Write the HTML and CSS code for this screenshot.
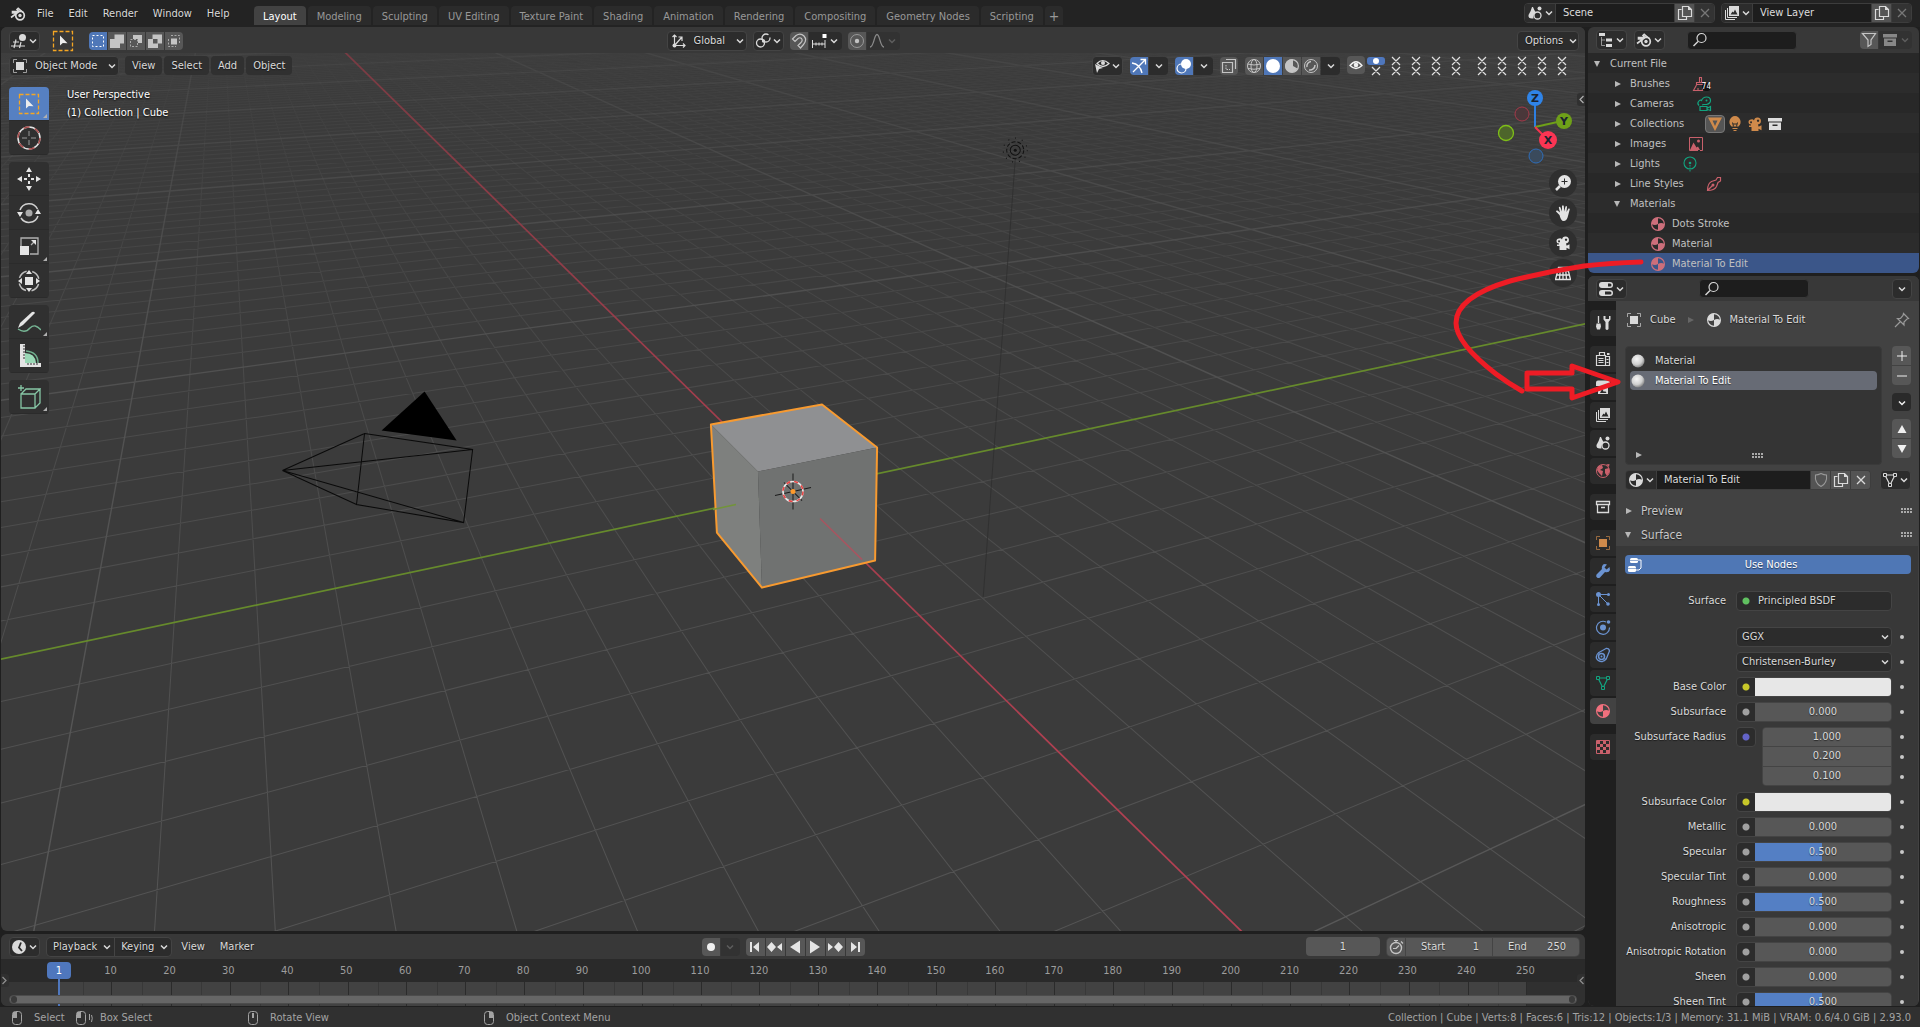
FILE: index.html
```html
<!DOCTYPE html>
<html lang="en">
<head>
<meta charset="utf-8">
<title>Blender</title>
<link rel="stylesheet" href="styles.css">
</head>
<body>
<svg class="sprite" aria-hidden="true">
  <defs>
    <symbol id="chev" viewBox="0 0 10 10"><path d="M2 3.500l3 3 3-3" fill="none" stroke="currentColor" stroke-width="1.500"/></symbol>
    <symbol id="blender" viewBox="0 0 16 16"><path d="M1 11.500l6-4.500H2.500V5.500H9L7 3.500 8.200 2.300l5 4.200" fill="none" stroke="currentColor" stroke-width="1.600"/><circle cx="10" cy="9.500" r="4.300" fill="none" stroke="currentColor" stroke-width="1.700"/><circle cx="10" cy="9.500" r="1.700" fill="currentColor"/></symbol>
    <symbol id="view3d" viewBox="0 0 16 16"><path d="M5 6.500L3 15M10 9l-1.500 6M2 9h6M0 13h14" fill="none" stroke="currentColor" stroke-width="1.200"/><circle cx="11.500" cy="4.500" r="3.500" fill="currentColor"/></symbol>
    <symbol id="boxsel" viewBox="0 0 22 22"><rect x="1.500" y="1.500" width="19" height="19" fill="none" stroke="#f5a623" stroke-width="1.300" stroke-dasharray="4 2"/><path d="M8 5.500v10l2.800-2.500 4.700.300z" fill="#ececec"/></symbol>
    <symbol id="selset" viewBox="0 0 16 16"><rect x="2.500" y="2.500" width="11" height="11" fill="none" stroke="#fff" stroke-dasharray="2 2"/></symbol>
    <symbol id="selext" viewBox="0 0 16 16"><path d="M5.500 1.500H15v9h-4v4.500H1v-9h4.500z" fill="#c4c4c4"/></symbol>
    <symbol id="selsub" viewBox="0 0 16 16"><path d="M5 2h9v8h-4V6H5z" fill="#c4c4c4"/><rect x="2.500" y="6.500" width="7" height="7" fill="none" stroke="#aaa" stroke-dasharray="2 1.500"/></symbol>
    <symbol id="selinv" viewBox="0 0 16 16"><path d="M5.500 1.500H15v9h-4v4.500H1v-9h4.500zM6 6v4.500h4.500V6z" fill="#c4c4c4" fill-rule="evenodd"/></symbol>
    <symbol id="selint" viewBox="0 0 16 16"><path d="M5 2.500h8.500V10M2.500 6v7.500H10" fill="none" stroke="#aaa" stroke-dasharray="2 1.500"/><rect x="5" y="5.500" width="6" height="6" fill="#c4c4c4"/></symbol>
    <symbol id="objmode" viewBox="0 0 16 16"><rect x="4" y="4" width="8" height="8" fill="currentColor"/><path d="M1.500 5V1.500H5M11 1.500h3.500V5M14.500 11v3.500H11M5 14.500H1.500V11" fill="none" stroke="currentColor" opacity=".65"/></symbol>
    <symbol id="axes" viewBox="0 0 16 16"><path d="M3.500 2v10.500H14M3.500 12.500L11 4M7.500 4H11v4M1.500 4l2-2 2 2M12 10.500l2 2-2 2" fill="none" stroke="currentColor" stroke-width="1.200"/><circle cx="3.500" cy="12.500" r="2" fill="currentColor"/></symbol>
    <symbol id="pivot" viewBox="0 0 16 16"><circle cx="5.500" cy="10" r="4" fill="none" stroke="currentColor" stroke-width="1.300"/><circle cx="11" cy="5" r="4" fill="none" stroke="currentColor" stroke-width="1.300" stroke-dasharray="21 3"/><circle cx="8.500" cy="8" r="1.700" fill="currentColor"/></symbol>
    <symbol id="magnet" viewBox="0 0 16 16"><path d="M1.500 6L5 2.500Q9.500-.500 13 3q3.500 4-.500 8.500L9.500 15 7 12.500 10 9.500q2-2 .500-4Q9 4 7 5.500L4 8.500z" fill="none" stroke="currentColor" stroke-width="1.200"/></symbol>
    <symbol id="snapinc" viewBox="0 0 16 16"><path d="M1.500 7v8M14 7v8M1.500 11H14M5 9.500v3M8 9.500v3M11 9.500v3" fill="none" stroke="currentColor"/><rect x="11.500" y="1" width="4" height="4" fill="#fff"/></symbol>
    <symbol id="propo" viewBox="0 0 16 16"><circle cx="8" cy="8" r="6.500" fill="none" stroke="currentColor" opacity=".6"/><circle cx="8" cy="8" r="2.200" fill="currentColor"/></symbol>
    <symbol id="smooth" viewBox="0 0 16 16"><path d="M1 14c4 0 4-12.500 7-12.500S11 14 15 14" fill="none" stroke="currentColor" stroke-width="1.300"/></symbol>
    <symbol id="viseye" viewBox="0 0 16 16"><path d="M3 5.500q5.500-6 12 0-6 6-12 0z" fill="none" stroke="currentColor" stroke-width="1.200"/><circle cx="9" cy="5" r="2" fill="currentColor"/><path d="M1 6l8 4-4 1-2 4z" fill="currentColor"/></symbol>
    <symbol id="gizmo" viewBox="0 0 16 16"><path d="M1 5q8 1 10 10M2 14L14 2M9.500 1.500H14.500V6.500" fill="none" stroke="#fff" stroke-width="1.300"/></symbol>
    <symbol id="overlay" viewBox="0 0 16 16"><circle cx="10" cy="6" r="5" fill="#fff"/><circle cx="5.500" cy="10.500" r="4.500" fill="none" stroke="#fff" stroke-width="1.200"/></symbol>
    <symbol id="xray" viewBox="0 0 16 16"><path d="M1.500 4.500h10v10h-10zM5 1.500h9.500V11" fill="none" stroke="currentColor" stroke-width="1.200"/><path d="M5 7v4.500h4" fill="none" stroke="currentColor" stroke-dasharray="1.500 1"/></symbol>
    <symbol id="wire" viewBox="0 0 16 16"><circle cx="8" cy="8" r="6.500" fill="none" stroke="currentColor"/><ellipse cx="8" cy="8" rx="3" ry="6.500" fill="none" stroke="currentColor"/><path d="M1.500 6q6.500 2 13 0M2 10.500q6 1.500 12 0" fill="none" stroke="currentColor"/></symbol>
    <symbol id="solid" viewBox="0 0 16 16"><circle cx="8" cy="8" r="7" fill="#fff"/></symbol>
    <symbol id="mat" viewBox="0 0 16 16"><circle cx="8" cy="8" r="6.400" fill="none" stroke="currentColor" stroke-width="1.200"/><path d="M9 1.500V8l4.500 2.500A6.500 6.500 0 1 1 9 1.500z" fill="currentColor"/></symbol>
    <symbol id="material" viewBox="0 0 16 16"><circle cx="8" cy="8" r="6.400" fill="none" stroke="currentColor" stroke-width="1.200"/><path d="M8 1.500V8q-3 2-6.500 0A6.500 6.500 0 0 1 8 1.500zM8 8q3-2 6.500 0A6.500 6.500 0 0 1 8 14.500z" fill="currentColor"/></symbol>
    <symbol id="render" viewBox="0 0 16 16"><circle cx="8" cy="8" r="6.500" fill="none" stroke="currentColor"/><path d="M4 9a4.500 4.500 0 0 1 4-5.500M12 7a5 5 0 0 1-6 5" fill="none" stroke="currentColor" stroke-width="1.500"/></symbol>
    <symbol id="eye" viewBox="0 0 16 16"><path d="M2 8.500q6-7.500 12 0-6 6-12 0z" fill="none" stroke="currentColor" stroke-width="1.300"/><circle cx="8" cy="8" r="2.300" fill="currentColor"/></symbol>
    <symbol id="scene" viewBox="0 0 16 16"><path d="M5 2q-1 4-3.500 8Q1 13.500 5 13.500h1.500Q6 9 9 7.500 7 5 6 2z" fill="currentColor"/><circle cx="12.500" cy="3.500" r="2" fill="currentColor"/><circle cx="10.500" cy="10.500" r="3.500" fill="none" stroke="currentColor" stroke-width="1.300"/></symbol>
    <symbol id="layers" viewBox="0 0 16 16"><path d="M1.500 5v9.500H11M3.500 3v9.500H13" fill="none" stroke="currentColor"/><path d="M5 1h10v10H5zM6.500 9.500h7L11 4.500 9.500 7.500l-1-1z" fill="currentColor" fill-rule="evenodd"/></symbol>
    <symbol id="image" viewBox="0 0 16 16"><path d="M10 14.500H1.500v-13h13v13H12" fill="none" stroke="currentColor"/><path d="M2 14l3.500-7.500 3 5 1.500-1 2 3.500z" fill="currentColor"/><circle cx="10.500" cy="5" r="1.500" fill="currentColor"/></symbol>
    <symbol id="copy" viewBox="0 0 16 16"><path d="M4.500 4.500h-3v10h8v-3M5.500 1.500h6l3 3v7h-9z" fill="none" stroke="currentColor" stroke-width="1.200"/><path d="M11 1v4h4z" fill="currentColor"/></symbol>
    <symbol id="x" viewBox="0 0 16 16"><path d="M4 4l8 8M12 4l-8 8" stroke="currentColor" stroke-width="1.300"/></symbol>
    <symbol id="tree" viewBox="0 0 16 16"><path d="M1 1h6v3H1zM8 6.500h6v3H8zM8 12h6v3H8z" fill="currentColor"/><path d="M3.500 5v8.500H7M3.500 8H7" fill="none" stroke="currentColor" opacity=".6"/></symbol>
    <symbol id="search" viewBox="0 0 16 16"><circle cx="9.500" cy="6" r="4.500" fill="none" stroke="currentColor" stroke-width="1.200"/><path d="M6 9.500L1.500 14" stroke="currentColor" stroke-width="1.400"/></symbol>
    <symbol id="funnel" viewBox="0 0 16 16"><path d="M1.500 1.500h13L10 8v4.500l-3 2V8z" fill="none" stroke="currentColor" stroke-width="1.200"/></symbol>
    <symbol id="box" viewBox="0 0 16 16"><path d="M1 2h14v3.500H1zM2 6.500h12V14H2zM5.500 8.500v1.500h5V8.500z" fill="currentColor" fill-rule="evenodd"/></symbol>
    <symbol id="boxline" viewBox="0 0 16 16"><path d="M1.500 2.500h13v3h-13zM2.500 5.500h11v8h-11zM6 8.500h4" fill="none" stroke="currentColor" stroke-width="1.300"/></symbol>
    <symbol id="brush" viewBox="0 0 16 16"><path d="M7.500 1.500h2v5h-2zM4.500 6.500h8v2h-8zM4.500 9l-3 5.500h9V12M6 14v-2" fill="none" stroke="currentColor" stroke-width="1.100"/></symbol>
    <symbol id="camline" viewBox="0 0 16 16"><path d="M3 9.500q-2-2-.500-4t3-1Q7 1 10.500 1q4 0 4 3.500 0 3-4 4H7.500L6 9M4 10.500h7v4H4zM11.500 12l3-1.500v4l-3-1" fill="none" stroke="currentColor" stroke-width="1.200"/><circle cx="10.500" cy="4.500" r="1" fill="currentColor"/></symbol>
    <symbol id="camfill" viewBox="0 0 16 16"><path d="M4 3.500a2.500 2.500 0 0 1 3 1A3.500 3.500 0 1 1 11 8.500v1h.500v1.200l3-1.500v5l-3-1.500V15H4.500v-4H2v-1.500h2V8.500a2.500 2.500 0 0 1 0-5zM4 5.200a1 1 0 1 0 .1 0zM11 3.500a1.200 1.200 0 1 0 .1 0z" fill="currentColor" fill-rule="evenodd"/></symbol>
    <symbol id="tri" viewBox="0 0 16 16"><path d="M1 1.500h14L8 15zM5.500 4.500L8 10l2.500-5.500z" fill="currentColor" fill-rule="evenodd"/></symbol>
    <symbol id="bulb" viewBox="0 0 16 16"><path d="M8 0a6 6 0 0 1 3.500 10.500H4.500A6 6 0 0 1 8 0z" fill="currentColor"/><path d="M5.500 12.500h5M6.500 14.500h3" stroke="currentColor"/><path d="M5.500 6.500l1 4M10.500 6.500l-1 4M6 8h4" stroke="#2b2b2b"/></symbol>
    <symbol id="light" viewBox="0 0 16 16"><circle cx="8" cy="7" r="6" fill="none" stroke="currentColor" stroke-width="1.100"/><circle cx="8" cy="7" r="1.300" fill="currentColor"/><path d="M8 9v7" stroke="currentColor" stroke-dasharray="1.500 1"/></symbol>
    <symbol id="pen" viewBox="0 0 16 16"><path d="M1.500 14.500q0-7 4-9L10 4l1.500-2.500H14.500V5L12 6.500l-1.500 4q-2 4-9 4zM2 14l4.500-4.500" fill="none" stroke="currentColor" stroke-width="1.200"/><circle cx="7" cy="9" r="1.500" fill="currentColor"/></symbol>
    <symbol id="props" viewBox="0 0 16 16"><rect x="1" y="1" width="14" height="6" rx="3" fill="currentColor"/><rect x="1" y="9" width="14" height="6" rx="3" fill="currentColor"/><path d="M10 2.500h2a1.500 1.500 0 0 1 0 3h-2zM7 10.500h5a1.500 1.500 0 0 1 0 3H7z" fill="#2b2b2b"/></symbol>
    <symbol id="tool" viewBox="0 0 16 16"><path d="M3.500 1v7" stroke="currentColor" stroke-width="1.300"/><path d="M1.500 8.500h4l.5 3-1 3h-3l-1-3zM8.500 1v3.500L10.500 7v7q1.500 2 3 0V7l2-2.500V1h-1.500v3h-3.500V1z" fill="currentColor"/></symbol>
    <symbol id="rend" viewBox="0 0 16 16"><path d="M4.500 4V1.500h5V4M1.500 4.500h9v10h-9zM10.500 5.500h4v9h-4M11.500 8.500h2M11.500 11.500h2" fill="none" stroke="currentColor" stroke-width="1.200"/><path d="M3.500 7.500h5M3.500 9.500h5M3.500 11.500h5" stroke="currentColor"/><path d="M12 2h2.500v2H12z" fill="currentColor"/></symbol>
    <symbol id="output" viewBox="0 0 16 16"><path d="M1 3.500q0-2 2-2h10q2 0 2 2V7H1zM3 8h10v7H3z" fill="currentColor"/><path d="M5 14l2-4 2 3 1-1 1.500 2z" fill="#2b2b2b"/></symbol>
    <symbol id="world" viewBox="0 0 16 16"><circle cx="8" cy="8" r="6.500" fill="none" stroke="currentColor"/><path d="M3 3l4-1 1 3-3 2 3 1-1 5-3-3-2-3zM10 6l4-1v5l-2 3-2-3zM11 1.500l3.500-.500-.500 3z" fill="currentColor"/></symbol>
    <symbol id="wrench" viewBox="0 0 16 16"><path d="M14.500 4l-3 2.500-2-2L12 1.500Q8 0 7 3.500q-.500 1.500 0 2.500L1.500 11.500q-1 2 .5 3t3 0L10 9q4 1 5-2z" fill="currentColor"/></symbol>
    <symbol id="part" viewBox="0 0 16 16"><circle cx="3.500" cy="3.500" r="2.500" fill="currentColor"/><path d="M3.500 3.500H14M3.500 3.500V14M4 4l9 9" stroke="currentColor"/><circle cx="13.500" cy="3.500" r="1.500" fill="currentColor"/><circle cx="3.500" cy="13.500" r="1.500" fill="currentColor"/><circle cx="13" cy="13" r="1.800" fill="currentColor"/></symbol>
    <symbol id="phys" viewBox="0 0 16 16"><path d="M11 3a6.500 6.500 0 1 0 3.500 5.500" fill="none" stroke="currentColor" stroke-width="1.200"/><circle cx="8" cy="8.500" r="3" fill="currentColor"/><circle cx="13.500" cy="3" r="1.800" fill="currentColor"/></symbol>
    <symbol id="constr" viewBox="0 0 16 16"><path d="M3 6l8-4.500Q14 1 14.500 4L11 12.500M4 5.500Q.500 8 1.500 11.500q2 3.500 6 3 3-1 3.500-3" fill="none" stroke="currentColor" stroke-width="1.300"/><circle cx="6.500" cy="9.500" r="3" fill="none" stroke="currentColor" stroke-width="1.500"/><circle cx="6.500" cy="9.500" r="1" fill="currentColor"/></symbol>
    <symbol id="mesh" viewBox="0 0 16 16"><path d="M3 3h10L8 13z" fill="none" stroke="currentColor" stroke-width="1.200"/><path d="M1.500 1.500h3v3h-3zM11.500 1.500h3v3h-3zM6.500 11.500h3v3h-3z" fill="#2b2b2b" stroke="currentColor"/></symbol>
    <symbol id="check" viewBox="0 0 16 16"><path d="M1.500 1.500h13v13h-13z" fill="none" stroke="currentColor"/><path d="M2 2h3v3H2zM8 2h3v3H8zM5 5h3v3H5zM11 5h3v3h-3zM2 8h3v3H2zM8 8h3v3H8zM5 11h3v3H5zM11 11h3v3h-3z" fill="currentColor"/></symbol>
    <symbol id="pin" viewBox="0 0 16 16"><path d="M9.500 1.500l5 5-1.500.5-3 3v3L3.500 6.500h3l2.500-3zM1 15l5.500-5.500" fill="none" stroke="currentColor" stroke-width="1.200"/></symbol>
    <symbol id="sphere" viewBox="0 0 16 16"><circle cx="8" cy="8" r="6.500" fill="url(#ball)"/></symbol>
    <symbol id="shield" viewBox="0 0 16 16"><path d="M8 1.500q3 1.500 5.500 1.500 1 8-5.500 11.500Q1.500 11 2.500 3 5 3 8 1.500z" fill="none" stroke="currentColor" stroke-width="1.100"/></symbol>
    <symbol id="nodes" viewBox="0 0 16 16"><rect x="3" y="1" width="8" height="5" rx="1.500" fill="#fff"/><rect x="1" y="9" width="8" height="6" rx="1.500" fill="#fff"/><path d="M11 3h3v8l-2 2H9" fill="none" stroke="#fff"/><path d="M3 3.500h8M1 11.500h8" stroke="#4f76b3" stroke-width=".6"/></symbol>
    <symbol id="clock" viewBox="0 0 16 16"><circle cx="8" cy="8" r="7" fill="currentColor"/><path d="M10 3.500L8 8.500l3 3.500" fill="none" stroke="#2b2b2b" stroke-width="1.800"/></symbol>
    <symbol id="stopw" viewBox="0 0 16 16"><circle cx="8" cy="9" r="5.500" fill="none" stroke="currentColor" stroke-width="1.400"/><path d="M6 1.500h4M8 2v2M13 2.500l2 2M8 9.500L11 6.500M8 9.500H5" stroke="currentColor" fill="none" stroke-width="1.200"/></symbol>
    <symbol id="mL" viewBox="0 0 16 16"><rect x="3.500" y="1.500" width="9" height="13" rx="3" fill="none" stroke="currentColor"/><path d="M4 2h4v6H3.500z" fill="currentColor"/></symbol>
    <symbol id="mM" viewBox="0 0 16 16"><rect x="3.500" y="1.500" width="9" height="13" rx="3" fill="none" stroke="currentColor"/><path d="M7 3h2v5H7z" fill="currentColor"/></symbol>
    <symbol id="mR" viewBox="0 0 16 16"><rect x="3.500" y="1.500" width="9" height="13" rx="3" fill="none" stroke="currentColor"/><path d="M8 2h4v6H8z" fill="currentColor"/></symbol>
    <radialGradient id="ball" cx=".4" cy=".35" r=".7"><stop offset="0" stop-color="#f6f6f6"/><stop offset=".6" stop-color="#d0d0d0"/><stop offset="1" stop-color="#777"/></radialGradient>
  </defs>
</svg>

<header class="topbar">
  <nav class="menus">
    <button class="menu logo" aria-label="Blender"><svg class="i"><use href="#blender"/></svg></button>
    <button class="menu">File</button><button class="menu">Edit</button><button class="menu">Render</button><button class="menu">Window</button><button class="menu">Help</button>
  </nav>
  <nav class="tabs">
    <button class="tab on">Layout</button><button class="tab">Modeling</button><button class="tab">Sculpting</button><button class="tab">UV Editing</button><button class="tab">Texture Paint</button><button class="tab">Shading</button><button class="tab">Animation</button><button class="tab">Rendering</button><button class="tab">Compositing</button><button class="tab">Geometry Nodes</button><button class="tab">Scripting</button><button class="tab plus">+</button>
  </nav>
  <div class="ids">
    <div class="idrow">
      <button class="pick" aria-label="Browse scene"><svg class="i"><use href="#scene"/></svg><svg class="c"><use href="#chev"/></svg></button><input aria-label="Scene name" value="Scene"><button class="sq" aria-label="New scene"><svg class="i"><use href="#copy"/></svg></button><button class="sq dim" aria-label="Delete scene"><svg class="i"><use href="#x"/></svg></button>
    </div>
    <div class="idrow">
      <button class="pick" aria-label="Browse view layer"><svg class="i"><use href="#layers"/></svg><svg class="c"><use href="#chev"/></svg></button><input aria-label="View layer name" value="View Layer"><button class="sq" aria-label="New view layer"><svg class="i"><use href="#copy"/></svg></button><button class="sq dim" aria-label="Delete view layer"><svg class="i"><use href="#x"/></svg></button>
    </div>
  </div>
</header>

<main class="work">
  <div class="left">
    <section class="area view">
      <svg class="scene" viewBox="0 0 1584 903" preserveAspectRatio="xMidYMid slice" aria-label="3D scene">
        <defs>
          <linearGradient id="g1" gradientUnits="userSpaceOnUse" x1="0" y1="25" x2="0" y2="903"><stop offset="0" stop-color="#4d4d4d" stop-opacity=".18"/><stop offset=".15" stop-color="#4d4d4d" stop-opacity=".45"/><stop offset=".35" stop-color="#4e4e4e" stop-opacity=".75"/><stop offset=".6" stop-color="#4f4f4f" stop-opacity=".95"/><stop offset="1" stop-color="#545454"/></linearGradient>
          <linearGradient id="g10" gradientUnits="userSpaceOnUse" x1="0" y1="25" x2="0" y2="903"><stop offset="0" stop-color="#505050" stop-opacity=".4"/><stop offset=".3" stop-color="#525252" stop-opacity=".9"/><stop offset="1" stop-color="#585858"/></linearGradient>
          <linearGradient id="gx" gradientUnits="userSpaceOnUse" x1="0" y1="25" x2="0" y2="903"><stop offset="0" stop-color="#7a3b43"/><stop offset=".4" stop-color="#a33d4c"/><stop offset="1" stop-color="#b54153"/></linearGradient>
        </defs>
        <path id="minor" fill="none" stroke="url(#g1)"/>
        <path id="major" fill="none" stroke="url(#g10)" stroke-width="1.400"/>
        <path id="axisx" fill="none" stroke="url(#gx)" stroke-width="1.700"/>
        <path id="axisy" fill="none" stroke="#668a2c" stroke-width="1.700"/>
        <path d="M424 364L381 403L456 413z"/>
        <path d="M364 406L472 422L463 495L356 477zM282 443L364 406M282 443L472 422M282 443L463 495M282 443L356 477" fill="none" stroke="#0a0a0a"/>
        <path d="M1014 132L982 569" stroke="#2c2c2c" stroke-width=".7"/>
        <g fill="none" stroke="#111"><circle cx="1014" cy="123" r="5"/><circle cx="1014" cy="123" r="8.500" stroke-dasharray="4 2"/><circle cx="1014" cy="123" r="12" stroke-dasharray="1 6"/></g><circle cx="1014" cy="123" r="1.500" fill="#111"/>
        <path d="M710 397L821 377L876 420L757 444z" fill="#8f9092"/>
        <path d="M710 397L757 444L761 560L716 505z" fill="#7e807e"/>
        <path d="M757 444L876 420L874 533L761 560z" fill="#707271"/>
        <path d="M710 397L821 377L876 420L874 533L761 560L716 505z" fill="none" stroke="#f79a30" stroke-width="2" stroke-linejoin="round"/>
        <path d="M819 491L861 532" stroke="#a85560" stroke-width="1.500"/>
        <path d="M712 482L735 477" stroke="#72943a" stroke-width="1.500"/>
        <path d="M792 446v36M774 468l36-8M783 455l18 18" stroke="#1c1c1c" fill="none"/>
        <circle cx="792" cy="464" r="10" fill="none" stroke="#e8e8e8" stroke-width="1.600"/><circle cx="792" cy="464" r="10" fill="none" stroke="#e84545" stroke-width="1.600" stroke-dasharray="4 4"/>
        <circle cx="792" cy="464" r="2.500" fill="#ff9a2b"/>
      </svg>
      <div class="hdr toolhdr">
        <div class="grp">
          <button class="dd" aria-label="Editor type"><svg class="i"><use href="#view3d"/></svg><svg class="c"><use href="#chev"/></svg></button>
          <button class="bare" aria-label="Select box"><svg class="i22"><use href="#boxsel"/></svg></button>
          <div class="seg modes"><button class="on" aria-label="Set"><svg class="i"><use href="#selset"/></svg></button><button aria-label="Extend"><svg class="i"><use href="#selext"/></svg></button><button aria-label="Subtract"><svg class="i"><use href="#selsub"/></svg></button><button aria-label="Invert"><svg class="i"><use href="#selinv"/></svg></button><button aria-label="Intersect"><svg class="i"><use href="#selint"/></svg></button></div>
        </div>
        <div class="grp mid">
          <label class="sel orient"><svg class="i"><use href="#axes"/></svg><select aria-label="Orientation"><option>Global</option></select><svg class="c"><use href="#chev"/></svg></label>
          <button class="dd" aria-label="Pivot"><svg class="i"><use href="#pivot"/></svg><svg class="c"><use href="#chev"/></svg></button>
          <div class="seg"><button aria-label="Snap"><svg class="i"><use href="#magnet"/></svg></button><button class="dark" aria-label="Snap to"><svg class="i"><use href="#snapinc"/></svg><svg class="c"><use href="#chev"/></svg></button></div>
          <div class="seg"><button aria-label="Proportional editing"><svg class="i"><use href="#propo"/></svg></button><button class="dark off" aria-label="Falloff"><svg class="i"><use href="#smooth"/></svg><svg class="c"><use href="#chev"/></svg></button></div>
        </div>
        <div class="grp end"><button class="dd opt">Options<svg class="c"><use href="#chev"/></svg></button></div>
      </div>
      <div class="hdr viewhdr">
        <label class="sel mode"><svg class="i"><use href="#objmode"/></svg><select aria-label="Mode"><option>Object Mode</option></select><svg class="c"><use href="#chev"/></svg></label>
        <div class="pulls"><button>View</button><button>Select</button><button>Add</button><button>Object</button></div>
        <div class="rt">
          <button class="dd" aria-label="Visibility"><svg class="i"><use href="#viseye"/></svg><svg class="c"><use href="#chev"/></svg></button>
          <div class="seg"><button class="on" aria-label="Gizmos"><svg class="i"><use href="#gizmo"/></svg></button><button class="dark s" aria-label="Gizmo options"><svg class="c"><use href="#chev"/></svg></button></div>
          <div class="seg"><button class="on" aria-label="Overlays"><svg class="i"><use href="#overlay"/></svg></button><button class="dark s" aria-label="Overlay options"><svg class="c"><use href="#chev"/></svg></button></div>
          <div class="seg"><button aria-label="X-ray"><svg class="i"><use href="#xray"/></svg></button></div>
          <div class="seg"><button aria-label="Wireframe"><svg class="i"><use href="#wire"/></svg></button><button class="on" aria-label="Solid"><svg class="i"><use href="#solid"/></svg></button><button aria-label="Material preview"><svg class="i"><use href="#mat"/></svg></button><button aria-label="Rendered"><svg class="i"><use href="#render"/></svg></button><button class="dark s" aria-label="Shading options"><svg class="c"><use href="#chev"/></svg></button></div>
          <div class="layers"><div class="seg"><button class="lit" aria-label="Collections"><svg class="i"><use href="#eye"/></svg></button></div>
          <svg class="xs" viewBox="0 0 206 20" aria-label="Collection layers"><rect x="2" y="1" width="18" height="8" rx="3" fill="#4f77bd"/><circle cx="11" cy="5" r="3" fill="#fff"/>
            <path stroke="#e0e0e0" stroke-width="1.200" d="M7 11l8 8m0-8l-8 8M27 1l8 8m0-8l-8 8M27 11l8 8m0-8l-8 8M47 1l8 8m0-8l-8 8M47 11l8 8m0-8l-8 8M67 1l8 8m0-8l-8 8M67 11l8 8m0-8l-8 8M87 1l8 8m0-8l-8 8M87 11l8 8m0-8l-8 8M113 1l8 8m0-8l-8 8M113 11l8 8m0-8l-8 8M133 1l8 8m0-8l-8 8M133 11l8 8m0-8l-8 8M153 1l8 8m0-8l-8 8M153 11l8 8m0-8l-8 8M173 1l8 8m0-8l-8 8M173 11l8 8m0-8l-8 8M193 1l8 8m0-8l-8 8M193 11l8 8m0-8l-8 8"/></svg></div>
        </div>
      </div>
      <div class="stage">
        <div class="toolbar">
          <div class="tools"><button class="on more" aria-label="Select box"><svg class="i22"><use href="#boxsel"/></svg></button><button aria-label="Cursor"><svg viewBox="0 0 24 24"><circle cx="12" cy="12" r="11" fill="none" stroke="#e4e4e4" stroke-width="1.500"/><circle cx="12" cy="12" r="11" fill="none" stroke="#a84a4a" stroke-width="1.500" stroke-dasharray="6 5.500"/><path d="M12 5v5M12 14v5M5 12h5M14 12h5" stroke="#999"/></svg></button></div>
          <div class="tools">
            <button aria-label="Move"><svg viewBox="0 0 24 24" fill="#e4e4e4"><path d="M12 0l3 5H9zM12 24l3-5H9zM0 12l5-3v6zM24 12l-5-3v6zM11 7h2v3h-2zM11 14h2v3h-2zM7 11h3v2H7zM14 11h3v2h-3z"/></svg></button>
            <button aria-label="Rotate"><svg viewBox="0 0 24 24"><path d="M3 9a9.500 9.500 0 0 1 17.500-1M21 15a9.500 9.500 0 0 1-17 2" fill="none" stroke="#d0d0d0" stroke-width="1.500"/><path d="M0 11h6l-3 5zM18 13h6l-3-5z" fill="#e4e4e4"/><circle cx="12" cy="12" r="3.500" fill="#aaa"/></svg></button>
            <button class="more" aria-label="Scale"><svg viewBox="0 0 24 24"><path d="M4 12V3h17v16h-8M14 10l4-4" fill="none" stroke="#b0b0b0" stroke-width="1.300"/><path d="M3 11h9v9H3zM14 5h5v5z" fill="#e4e4e4"/></svg></button>
            <button aria-label="Transform"><svg viewBox="0 0 24 24"><circle cx="12" cy="12" r="10" fill="none" stroke="#c0c0c0" stroke-width="1.500" stroke-dasharray="10 5.700" stroke-dashoffset="-3"/><path d="M8 8h8v8H8zM12 1l3 4H9zM12 23l3-4H9zM1 12l4-3v6zM23 12l-4-3v6z" fill="#e4e4e4"/></svg></button>
          </div>
          <div class="tools">
            <button class="more" aria-label="Annotate"><svg viewBox="0 0 24 24"><path d="M1 18l2-5L15 2q2-1 3 1L6 15z" fill="#e4e4e4"/><path d="M1 19q7 5 12-1 5-5 11 2" fill="none" stroke="#76b594" stroke-width="1.400"/></svg></button>
            <button aria-label="Measure"><svg viewBox="0 0 24 24"><path d="M3 0h5v19h16v4H3z" fill="#e4e4e4"/><path d="M8 19V9q10 0 11 10z" fill="#9ad9b6"/><path d="M9 7q12 1 12 12" fill="none" stroke="#6fae8d" stroke-width="1.500"/><path d="M6 2h2M6 5h2M6 8h2M6 11h2M6 14h2M11 19v2M14 19v2M17 19v2M20 19v2" stroke="#333"/></svg></button>
          </div>
          <div class="tools"><button class="more" aria-label="Add cube"><svg viewBox="0 0 24 24"><path d="M4 9h14v14H4zM4 9l5-5h14l-5 5M23 4v14l-5 5M1 3h6M4 0v6" fill="none" stroke="#86c6a5" stroke-width="1.300"/></svg></button></div>
        </div>
        <div class="info"><span>User Perspective</span><span>(1) Collection | Cube</span></div>
        <div class="nav">
          <svg class="giz" viewBox="0 0 80 80" aria-label="Axis gizmo"><path d="M38 40V12" stroke="#2d7fe0" stroke-width="2"/><path d="M38 40l27-6" stroke="#6fa019" stroke-width="2"/><path d="M38 40l12 12" stroke="#f5334f" stroke-width="2"/><circle cx="25" cy="27" r="7" fill="#4a373a" stroke="#a53a4a"/><circle cx="9" cy="46" r="7.500" fill="#4d652b" stroke="#7fbf18" stroke-width="1.300"/><circle cx="39" cy="69" r="7" fill="#3a4a5c" stroke="#2e6db8"/><circle cx="38" cy="11" r="8" fill="#2f84e8"/><circle cx="67" cy="34" r="8" fill="#6fa019"/><circle cx="51" cy="53" r="9" fill="#fb3553"/><g class="ax"><text x="38" y="15">Z</text><text x="67" y="38">Y</text><text x="51" y="57">X</text></g></svg>
          <button aria-label="Zoom"><svg class="i"><circle cx="9.500" cy="6.500" r="6.500" fill="currentColor"/><path d="M5 11l-4 4" stroke="currentColor" stroke-width="2.500"/><path d="M9.500 3.500v6M6.500 6.500h6" stroke="#2b2b2b"/></svg></button>
          <button aria-label="Pan"><svg class="i"><path d="M4.500 10L1 6.500q0-1.500 1.500-1L5 7.500 3.800 2.500q.700-1.500 1.700 0L7 6.500 7 1q1-1.500 1.800 0L9.200 6.500 10.500 1.500q1.200-1 1.500.5L11.500 7l2-3.500q1.500-.500 1.200 1L13 11q-1 5-4.500 5Q6 16 4.500 10z" fill="currentColor"/></svg></button>
          <button aria-label="Camera view"><svg class="i"><use href="#camfill"/></svg></button>
          <button aria-label="Perspective"><svg class="i"><path d="M3.500 2.500h9l3 12H.500zM8 2v12M5.500 2.500L4.500 14.500M10.500 2.500l1 12M2.500 6h11M1.500 10h13" fill="none" stroke="currentColor" stroke-width="1.300"/></svg></button>
        </div>
        <button class="nub" aria-label="Show sidebar"><svg viewBox="0 0 8 13"><path d="M6.500 3L3 6.500 6.500 10" fill="none" stroke="#b0b0b0" stroke-width="1.200"/></svg></button>
      </div>
    </section>

    <section class="area time">
      <div class="hdr timehdr">
        <div class="grp">
          <button class="dd" aria-label="Editor type"><svg class="i"><use href="#clock"/></svg><svg class="c"><use href="#chev"/></svg></button>
          <div class="seg lined"><button class="dark pb">Playback<svg class="c"><use href="#chev"/></svg></button><button class="dark pb">Keying<svg class="c"><use href="#chev"/></svg></button></div>
          <button class="menu">View</button><button class="menu">Marker</button>
        </div>
        <div class="grp mid">
          <div class="seg"><button class="lit" aria-label="Auto keying"><svg class="i"><circle cx="8" cy="8" r="4" fill="currentColor"/></svg></button><button class="dark s off" aria-label="Keying options"><svg class="c"><use href="#chev"/></svg></button></div>
          <div class="seg play"><button aria-label="First frame"><svg class="i"><path d="M3 3h2v10H3zM12 3v10L6 8z" fill="currentColor"/></svg></button><button aria-label="Previous keyframe"><svg class="i"><path d="M0 8l4.500-5L9 8l-4.500 5zM15 4v8l-5-4z" fill="currentColor"/></svg></button><button aria-label="Play reverse"><svg class="i"><path d="M13 1.500v13L3 8z" fill="currentColor"/></svg></button><button aria-label="Play"><svg class="i"><path d="M3 1.500v13L13 8z" fill="currentColor"/></svg></button><button aria-label="Next keyframe"><svg class="i"><path d="M16 8l-4.500-5L7 8l4.500 5zM1 4v8l5-4z" fill="currentColor"/></svg></button><button aria-label="Last frame"><svg class="i"><path d="M11 3h2v10h-2zM4 3v10l6-5z" fill="currentColor"/></svg></button></div>
        </div>
        <div class="grp end">
          <input class="num cur" aria-label="Current frame" value="1">
          <div class="seg lined"><button aria-label="Use preview range"><svg class="i"><use href="#stopw"/></svg></button><label class="fr">Start<input value="1"></label><label class="fr">End<input value="250"></label></div>
        </div>
      </div>
      <div class="ruler"><span>10</span><span>20</span><span>30</span><span>40</span><span>50</span><span>60</span><span>70</span><span>80</span><span>90</span><span>100</span><span>110</span><span>120</span><span>130</span><span>140</span><span>150</span><span>160</span><span>170</span><span>180</span><span>190</span><span>200</span><span>210</span><span>220</span><span>230</span><span>240</span><span>250</span></div>
      <div class="track">
        <div class="ticks"><i></i><i></i><i></i><i></i><i></i><i></i><i></i><i></i><i></i><i></i><i></i><i></i><i></i><i></i><i></i><i></i><i></i><i></i><i></i><i></i><i></i><i></i><i></i><i></i><i></i></div>
      </div>
      <div class="head"><b>1</b></div>
      <div class="bar"></div>
      <button class="nub tl" aria-label="Show channels"><svg viewBox="0 0 8 13"><path d="M1.500 3L5 6.500 1.500 10" fill="none" stroke="#909090" stroke-width="1.200"/></svg></button>
      <button class="nub tr" aria-label="Show sidebar"><svg viewBox="0 0 8 13"><path d="M6.500 3L3 6.500 6.500 10" fill="none" stroke="#909090" stroke-width="1.200"/></svg></button>
    </section>
  </div>

  <div class="right">
    <section class="area outliner">
      <div class="hdr outhdr">
        <button class="dd" aria-label="Editor type"><svg class="i"><use href="#tree"/></svg><svg class="c"><use href="#chev"/></svg></button>
        <button class="dd" aria-label="Display mode"><svg class="i"><use href="#blender"/></svg><svg class="c"><use href="#chev"/></svg></button>
        <label class="find"><svg class="i"><use href="#search"/></svg><input aria-label="Search outliner"></label>
        <div class="seg filt"><button aria-label="Filter"><svg class="i"><use href="#funnel"/></svg></button><button class="dark off" aria-label="New collection"><svg class="i"><use href="#box"/></svg><svg class="c"><use href="#chev"/></svg></button></div>
      </div>
      <ul class="rows">
        <li class="l0"><i class="tw dn"></i>Current File</li>
        <li><i class="tw"></i>Brushes<span class="ic red cnt"><svg class="i"><use href="#brush"/></svg><small>74</small></span></li>
        <li><i class="tw"></i>Cameras<span class="ic grn"><svg class="i"><use href="#camline"/></svg></span></li>
        <li><i class="tw"></i>Collections<span class="ic org"><b><svg class="i"><use href="#tri"/></svg></b><svg class="i"><use href="#bulb"/></svg><svg class="i"><use href="#camfill"/></svg><svg class="i wh"><use href="#box"/></svg></span></li>
        <li><i class="tw"></i>Images<span class="ic red"><svg class="i"><use href="#image"/></svg></span></li>
        <li><i class="tw"></i>Lights<span class="ic grn"><svg class="i"><use href="#light"/></svg></span></li>
        <li><i class="tw"></i>Line Styles<span class="ic red"><svg class="i"><use href="#pen"/></svg></span></li>
        <li><i class="tw dn"></i>Materials</li>
        <li class="l2"><svg class="i"><use href="#material"/></svg>Dots Stroke</li>
        <li class="l2"><svg class="i"><use href="#material"/></svg>Material</li>
        <li class="l2 on"><svg class="i"><use href="#material"/></svg>Material To Edit</li>
      </ul>
    </section>

    <section class="area props">
      <div class="hdr prophdr">
        <button class="dd" aria-label="Editor type"><svg class="i"><use href="#props"/></svg><svg class="c"><use href="#chev"/></svg></button>
        <label class="find"><svg class="i"><use href="#search"/></svg><input aria-label="Search properties"></label>
        <button class="dd one" aria-label="Options"><svg class="c"><use href="#chev"/></svg></button>
      </div>
      <div class="body">
        <nav class="ptabs">
          <button class="gap" aria-label="Tool"><svg class="i"><use href="#tool"/></svg></button>
          <button aria-label="Render"><svg class="i"><use href="#rend"/></svg></button>
          <button aria-label="Output"><svg class="i"><use href="#output"/></svg></button>
          <button aria-label="View layer"><svg class="i"><use href="#layers"/></svg></button>
          <button aria-label="Scene"><svg class="i"><use href="#scene"/></svg></button>
          <button class="gap red" aria-label="World"><svg class="i"><use href="#world"/></svg></button>
          <button class="gap" aria-label="Collection"><svg class="i"><use href="#boxline"/></svg></button>
          <button class="org" aria-label="Object"><svg class="i"><use href="#objmode"/></svg></button>
          <button class="blu" aria-label="Modifiers"><svg class="i"><use href="#wrench"/></svg></button>
          <button class="blu" aria-label="Particles"><svg class="i"><use href="#part"/></svg></button>
          <button class="blu" aria-label="Physics"><svg class="i"><use href="#phys"/></svg></button>
          <button class="blu" aria-label="Constraints"><svg class="i"><use href="#constr"/></svg></button>
          <button class="grn" aria-label="Data"><svg class="i"><use href="#mesh"/></svg></button>
          <button class="on gap" aria-label="Material"><svg class="i"><use href="#material"/></svg></button>
          <button class="red" aria-label="Texture"><svg class="i"><use href="#check"/></svg></button>
        </nav>
        <div class="pane">
          <div class="crumb"><svg class="i"><use href="#objmode"/></svg><span>Cube</span><i class="tw"></i><svg class="i"><use href="#material"/></svg><span>Material To Edit</span><button class="bare pin" aria-label="Pin"><svg class="i"><use href="#pin"/></svg></button></div>
          <div class="slots">
            <div class="list"><div class="slot"><svg class="i"><use href="#sphere"/></svg>Material</div><div class="slot on"><svg class="i"><use href="#sphere"/></svg>Material To Edit</div><div class="foot"><i class="tw"></i><i class="grip"></i></div></div>
            <div class="ops"><div><button aria-label="Add slot"><svg class="c" viewBox="0 0 10 10"><path d="M5 0v10M0 5h10" stroke="currentColor"/></svg></button><button aria-label="Remove slot"><svg class="c" viewBox="0 0 10 10"><path d="M0 5h10" stroke="currentColor"/></svg></button></div><div class="dk"><button aria-label="Specials"><svg class="c"><use href="#chev"/></svg></button></div><div><button aria-label="Move up"><svg class="c" viewBox="0 0 10 10"><path d="M5 1l4.500 8h-9z" fill="currentColor"/></svg></button><button aria-label="Move down"><svg class="c" viewBox="0 0 10 10"><path d="M5 9l4.500-8h-9z" fill="currentColor"/></svg></button></div></div>
          </div>
          <div class="mrow">
            <div class="idrow"><button class="pick" aria-label="Browse material"><svg class="i"><use href="#material"/></svg><svg class="c"><use href="#chev"/></svg></button><input aria-label="Material name" value="Material To Edit"><button class="sq half" aria-label="Fake user"><svg class="i"><use href="#shield"/></svg></button><button class="sq" aria-label="New material"><svg class="i"><use href="#copy"/></svg></button><button class="sq" aria-label="Unlink"><svg class="i"><use href="#x"/></svg></button></div>
            <button class="dd" aria-label="Link"><svg class="i"><use href="#mesh"/></svg><svg class="c"><use href="#chev"/></svg></button>
          </div>
          <button class="ph"><i class="tw"></i>Preview<i class="grip"></i></button>
          <button class="ph"><i class="tw dn"></i>Surface<i class="grip"></i></button>
          <div class="sub">
            <button class="use"><svg class="i"><use href="#nodes"/></svg><span>Use Nodes</span></button>
            <div class="f sp"><span>Surface</span><button class="shader"><i class="dot g"></i>Principled BSDF</button></div>
            <div class="f"><span></span><label class="sel"><select aria-label="Distribution"><option>GGX</option></select><svg class="c"><use href="#chev"/></svg></label><i class="an"></i></div>
            <div class="f"><span></span><label class="sel"><select aria-label="Subsurface method"><option>Christensen-Burley</option></select><svg class="c"><use href="#chev"/></svg></label><i class="an"></i></div>
            <div class="f"><label for="bc">Base Color</label><div class="w"><i class="dot y"></i><button id="bc" class="col" aria-label="Base Color"></button></div><i class="an"></i></div>
            <div class="f"><label for="ss">Subsurface</label><div class="w"><i class="dot"></i><input id="ss" value="0.000"></div><i class="an"></i></div>
            <div class="f vec"><label for="r0">Subsurface Radius</label><div class="w"><i class="dot v"></i><div class="v3"><input id="r0" value="1.000"><input aria-label="Subsurface Radius Y" value="0.200"><input aria-label="Subsurface Radius Z" value="0.100"></div></div><div class="an3"><i class="an"></i><i class="an"></i><i class="an"></i></div></div>
            <div class="f"><label for="sc">Subsurface Color</label><div class="w"><i class="dot y"></i><button id="sc" class="col" aria-label="Subsurface Color"></button></div><i class="an"></i></div>
            <div class="f"><label for="me">Metallic</label><div class="w"><i class="dot"></i><input id="me" value="0.000"></div><i class="an"></i></div>
            <div class="f"><label for="sp">Specular</label><div class="w"><i class="dot"></i><input id="sp" value="0.500" style="--fill:49%"></div><i class="an"></i></div>
            <div class="f"><label for="st">Specular Tint</label><div class="w"><i class="dot"></i><input id="st" value="0.000"></div><i class="an"></i></div>
            <div class="f"><label for="ro">Roughness</label><div class="w"><i class="dot"></i><input id="ro" value="0.500" style="--fill:49%"></div><i class="an"></i></div>
            <div class="f"><label for="ai">Anisotropic</label><div class="w"><i class="dot"></i><input id="ai" value="0.000"></div><i class="an"></i></div>
            <div class="f"><label for="ar">Anisotropic Rotation</label><div class="w"><i class="dot"></i><input id="ar" value="0.000"></div><i class="an"></i></div>
            <div class="f"><label for="sh">Sheen</label><div class="w"><i class="dot"></i><input id="sh" value="0.000"></div><i class="an"></i></div>
            <div class="f"><label for="sn">Sheen Tint</label><div class="w"><i class="dot"></i><input id="sn" value="0.500" style="--fill:49%"></div><i class="an"></i></div>
          </div>
        </div>
      </div>
    </section>
    <svg class="mark" viewBox="0 0 200 150" aria-hidden="true"><path d="M191 11Q160 12 134 15Q95 21 60 30Q6 46 6 72Q6 92 46 123Q58 132 72 140M77 122H122V115L168 131L122 147V138H77z" fill="none" stroke="#ee1c25" stroke-width="5" stroke-linecap="round" stroke-linejoin="round"/></svg>
  </div>
</main>

<footer class="status">
  <div class="hint h1"><svg class="i"><use href="#mL"/></svg><span>Select</span></div>
  <div class="hint h2"><svg class="i"><use href="#mL"/></svg><svg class="drag" viewBox="0 0 4 10"><path d="M.500 1v6M2.500 2q1.500 3 0 7" fill="none" stroke="currentColor"/></svg><span>Box Select</span></div>
  <div class="hint h3"><svg class="i"><use href="#mM"/></svg><span>Rotate View</span></div>
  <div class="hint"><svg class="i"><use href="#mR"/></svg><span>Object Context Menu</span></div>
  <div class="stats">Collection | Cube | Verts:8 | Faces:6 | Tris:12 | Objects:1/3 | Memory: 31.1 MiB | VRAM: 0.6/4.0 GiB | 2.93.0</div>
</footer>
<script src="grid.js"></script>
</body>
</html>
```
FILE: styles.css
```css
* { box-sizing: border-box; }
html, body { height: 100%; }
body { margin: 0; display: flex; flex-direction: column; overflow: hidden; background: #1f1f1f; color: #dadada; font: 11px/14px "DejaVu Sans Condensed", "DejaVu Sans", sans-serif; }
button, input, select { font: inherit; color: inherit; border: 0; padding: 0; margin: 0; background: none; border-radius: 0; min-width: 0; text-shadow: inherit; }
ul { list-style: none; margin: 0; padding: 0; }
i { font-style: normal; }
svg { flex: none; display: block; }
.sprite { position: absolute; width: 0; height: 0; }
.i { width: 16px; height: 16px; }
.c { width: 10px; height: 10px; }
.i22 { width: 22px; height: 22px; }
.red { color: #c9606b; }
.grn { color: #12a37f; }
.org { color: #cf8a4b; }
.blu { color: #6b93d1; }

/* top bar */
.topbar { display: flex; height: 27px; flex: none; padding-right: 8px; background: #232323; }
.menus { display: flex; align-items: center; width: 254px; padding: 0 0 0 7px; }
.menu { padding: 0 8px 0 7px; height: 20px; text-shadow: 0 1px 1px #0008; }
.menu.logo { padding: 0 4px 0 3px; }
.tabs { display: flex; align-items: flex-end; gap: 2px; padding-bottom: 2px; }
.tab { height: 19px; padding: 2px 9px 0; background: #2b2b2b; color: #989898; border-radius: 4px 4px 0 0; }
.tab.on { background: #424242; color: #fff; }
.plus { padding: 0 4px; width: 18px; font-size: 14px; line-height: 14px; }
.ids { display: flex; gap: 6px; margin-left: auto; padding-top: 3px; }
.idrow { display: flex; height: 20px; border: 1px solid #3d3d3d; border-radius: 4px; overflow: hidden; }
.idrow input { width: 118px; padding: 0 7px; background: #1d1d1d; color: #dcdcdc; }
.pick { display: flex; align-items: center; gap: 1px; width: 31px; padding: 0 2px; background: #2c2c2c; flex: none; border-right: 1px solid #3d3d3d; }
.sq { width: 20px; flex: none; display: grid; place-items: center; background: #545454; border-left: 1px solid #3d3d3d; }
.sq.dim { background: #333; color: #777; }
.sq.half { color: #999; }

/* areas */
.work { flex: 1; min-height: 0; display: grid; grid-template-columns: minmax(0, 1fr) 331px; gap: 3px; padding: 0 1px; }
.left, .right { display: flex; flex-direction: column; min-height: 0; gap: 3px; position: relative; }
.area { border-radius: 6px; overflow: hidden; position: relative; }
.hdr { display: flex; align-items: center; height: 25px; flex: none; background: #383838; text-shadow: 0 1px 1px #0008; position: relative; }
.dd, .sel { display: flex; align-items: center; gap: 1px; height: 20px; padding: 0 1px; background: #2c2c2c; border: 1px solid #444; border-radius: 4px; flex: none; }
.bare { display: grid; place-items: center; }
.seg { display: flex; height: 18px; gap: 1px; border-radius: 4px; overflow: hidden; flex: none; }
.seg > button { width: 18px; display: flex; align-items: center; justify-content: center; background: #575757; color: #c4c4c4; }
.seg > .lit { color: #f0f0f0; }
.seg > .on { background: #4f77b8; }
.seg > .dark { width: 33px; background: #2c2c2c; color: #dadada; gap: 2px; }
.seg > .dark.s { width: 19px; }
.seg > .off { background: #323232; color: #888; }
.off .c { opacity: .5; }
.lined { box-shadow: 0 0 0 1px #444; background: #444; }
.sel select { appearance: none; flex: 1; align-self: stretch; padding: 0 4px; }

/* viewport */
.view { flex: 1; min-height: 0; background: #3b3b3b; display: flex; flex-direction: column; }
.scene { position: absolute; inset: 0; width: 100%; height: 100%; }
.toolhdr, .timehdr { display: grid; grid-template-columns: 1fr auto 1fr; padding: 0 6px 0 8px; }
.toolhdr { padding-top: 1px; height: 26px; }
.grp { display: flex; align-items: center; }
.toolhdr .bare { margin: 0 15px 0 12px; }
.mid { gap: 6px; padding-right: 22px; }
.end { justify-content: flex-end; gap: 7px; }
.orient { width: 80px; padding-left: 3px; }
.orient select { padding-left: 6px; }
.opt { width: 62px; padding-left: 7px; gap: 5px; }
.viewhdr { background: none; height: 25px; padding: 0 14px 0 8px; }
.mode { width: 110px; padding-left: 2px; }
.mode select { padding: 0 4px 0 6px; }
.pulls { display: flex; gap: 2px; margin-left: 6px; }
.pulls button { height: 19px; padding: 0 7px; background: #303030; border-radius: 4px; }
.rt { display: flex; align-items: center; gap: 7px; margin-left: auto; }
.layers { display: flex; }
.xs { width: 206px; height: 20px; }
.stage { position: relative; flex: 1; padding: 9px 0 0 8px; display: flex; gap: 18px; }
.toolbar { display: flex; flex-direction: column; gap: 7px; }
.tools { display: grid; width: 40px; border-radius: 4px; overflow: hidden; flex: none; }
.tools button { height: 34px; display: grid; place-items: center; background: #303030; position: relative; border-bottom: 1px solid #2b2b2b; }
.tools button.on { background: #5680c2; }
.tools button svg { width: 24px; height: 24px; }
.tools button .i22 { width: 22px; height: 22px; }
.more::after { content: ""; position: absolute; right: 2px; bottom: 2px; border: 2px solid; border-color: transparent #b0b0b0 #b0b0b0 transparent; }
.info { display: flex; flex-direction: column; gap: 4px; padding-top: 1px; color: #fff; text-shadow: 0 1px 2px #000; }
.nav { margin: 0 8px 0 auto; display: flex; flex-direction: column; align-items: flex-end; gap: 2px; }
.giz { width: 80px; height: 80px; }
.ax { font: bold 11px "DejaVu Sans", sans-serif; text-anchor: middle; fill: #1b2330; }
.nav button { width: 28px; height: 28px; border-radius: 50%; background: #2f2f2f; display: grid; place-items: center; color: #e4e4e4; }
.nub { position: absolute; right: 0; top: 15px; width: 8px; height: 13px; background: #303030; border-radius: 3px 0 0 3px; }
.nub.tl { right: auto; left: 0; top: 40px; border-radius: 0 3px 3px 0; }
.nub.tr { top: 40px; }

/* timeline */
.time { background: #303030; flex: none; }
.timehdr .dd { margin-right: 7px; }
.seg > .pb { width: auto; padding: 0 2px 0 6px; gap: 5px; }
.timehdr .menu { padding: 0 0 0 10px; margin-right: 5px; }
.timehdr .play > button { width: 19px; color: #e6e6e6; }
.num, .fr { background: #575757; text-align: center; }
.cur { width: 74px; height: 19px; border-radius: 4px; }
.fr { display: flex; align-items: center; width: 86px; padding: 0 13px 0 15px; }
.fr input { flex: 1; width: 0; text-align: right; }
.ruler { display: flex; height: 23px; padding: 1px 30px 0 80px; background: #2a2a2a; color: #9d9d9d; align-items: center; }
.ruler span { flex: 1; text-align: center; }
.track { height: 24px; background: linear-gradient(90deg, #363636 58px, #424242 58px, #424242 calc(100% - 58px), #303030 calc(100% - 58px)); padding: 0 28px 0 82px; }
.ticks { display: flex; height: 100%; }
.ticks i { flex: 1; background: linear-gradient(90deg, #383838 1px, transparent 1px), linear-gradient(90deg, transparent calc(50% - 1px), #2b2b2b calc(50% - 1px), #2b2b2b 50%, transparent 50%); }
.head { position: absolute; left: 46px; top: 28px; width: 24px; bottom: 0; background: linear-gradient(#4f77bd, #4f77bd) center / 2px 100% no-repeat; }
.head b { display: block; height: 17px; line-height: 17px; font-weight: normal; text-align: center; background: #4f77bd; color: #fff; border-radius: 4px; }
.bar { position: absolute; left: 8px; right: 8px; bottom: 2px; height: 9px; border-radius: 5px; background: #666; border: 1px solid #4c4c4c; }
.bar::before, .bar::after { content: ""; position: absolute; top: 0; width: 6px; height: 7px; border-radius: 3px; background: #3a3a3a; left: 1px; }
.bar::after { left: auto; right: 1px; }

/* outliner */
.outliner { background: #282828; flex: none; }
.outhdr, .prophdr { gap: 7px; padding: 0 7px 0 8px; }
.outhdr { height: 26px; }
.find { display: flex; align-items: center; height: 19px; width: 110px; padding-left: 4px; background: #1d1d1d; border: 1px solid #383838; border-radius: 4px; margin: 0 auto 0 15px; }
.find input { flex: 1; width: 0; }
.rows li { display: flex; align-items: center; height: 20px; padding: 2px 0 0 25px; color: #c0c0c0; }
.rows li:nth-child(even) { background: #2c2c2c; }
.rows .l0 { padding-left: 5px; }
.rows .l2 { padding-left: 62px; gap: 6px; }
.rows .l2 .i { color: #cd6f7b; }
.rows li.on { background: #3b5689; }
.tw { width: 17px; flex: none; }
.tw::before { content: ""; display: block; width: 0; margin-left: 2px; border: solid transparent; border-width: 3px 0 3px 6px; border-left-color: #b8b8b8; }
.tw.dn::before { margin-left: 1px; border-width: 6px 3px 0; border-color: #b8b8b8 transparent transparent; }
.ic { display: flex; align-items: center; gap: 4px; margin-left: 22px; }
.ic b { display: grid; place-items: center; width: 20px; height: 18px; background: #555; border: 1px solid #777; border-radius: 4px; margin: 0 -2px 0 -1px; }
.cnt small { margin-left: -10px; margin-top: 6px; font-size: 8px; line-height: 8px; color: #fff; background: #111; border-radius: 4px; }
.wh { color: #ddd; }

/* properties */
.props { flex: 1; min-height: 0; background: #424242; display: flex; flex-direction: column; }
.prophdr .find { margin-left: 65px; }
.one { width: 20px; padding: 0 4px; }
.body { flex: 1; min-height: 0; display: flex; }
.ptabs { width: 28px; flex: none; display: flex; flex-direction: column; gap: 2px; padding: 9px 0 0 2px; background: #1f1f1f; }
.ptabs button { height: 26px; flex: none; display: grid; place-items: center; background: #2b2b2b; border-radius: 4px 0 0 4px; }
.ptabs button.on { background: #424242; color: #f0707d; }
.ptabs .gap { margin-bottom: 8px; }
.pane { flex: 1; min-width: 0; display: flex; flex-direction: column; text-shadow: 0 1px 1px #0008; }
.crumb { display: flex; align-items: center; height: 37px; padding: 0 9px 0 10px; gap: 8px; margin-bottom: 8px; flex: none; }
.crumb .tw { width: 10px; margin: 0 2px; opacity: .3; }
.crumb .pin { margin-left: auto; color: #999; }
.slots { display: flex; gap: 10px; padding: 0 8px 0 9px; height: 119px; flex: none; }
.list { flex: 1; min-width: 0; display: flex; flex-direction: column; padding: 4px; gap: 1px; background: #343434; border-radius: 4px; border: 1px solid #3a3a3a; }
.slot { display: flex; align-items: center; gap: 9px; height: 19px; border-radius: 4px; }
.slot.on { background: #676b75; color: #fff; }
.foot { margin: auto 0 2px; display: flex; align-items: center; gap: 101px; padding-left: 4px; }
.grip { width: 12px; height: 5px; background: radial-gradient(circle at 1px 1px, #aaa 1px, transparent 1px) 0 0 / 3px 3px; }
.ops { display: flex; flex-direction: column; gap: 8px; width: 19px; flex: none; }
.ops div { display: grid; grid-template-columns: 1fr; gap: 1px; border-radius: 4px; overflow: hidden; flex: none; }
.ops button { height: 19px; display: grid; place-items: center; background: #575757; color: #f0f0f0; }
.ops .dk { height: 18px; }
.ops .dk button { background: #2a2a2a; }
.mrow { display: flex; gap: 9px; padding: 5px 8px 8px 9px; flex: none; }
.mrow .idrow { flex: 1; }
.mrow .idrow input { flex: 1; width: 0; }
.ph { display: flex; align-items: center; height: 24px; flex: none; padding: 1px 6px 0 8px; color: #c8c8c8; font-size: 12px; }
.ph .grip { margin-left: auto; }
.sub { flex: 1; background: #383838; padding: 9px 7px 0 9px; margin-right: 1px; display: flex; flex-direction: column; gap: 5px; }
.use { height: 19px; flex: none; display: grid; grid-template-columns: 20px 1fr 16px; align-items: center; padding-left: 2px; background: #4f77b5; border-radius: 4px; color: #fff; }
.f { display: grid; grid-template-columns: 101px 155px 20px; min-height: 20px; flex: none; align-items: center; }
.f > :first-child { text-align: right; white-space: nowrap; }
.f > :nth-child(2) { margin-left: 10px; width: 156px; }
.f > :nth-child(3) { margin-left: 19px; }
.sp { margin: 12px 0 11px; }
.shader { display: flex; align-items: center; gap: 3px; height: 20px; background: #2c2c2c; border: 1px solid #444; border-radius: 4px; padding-right: 8px; }
.w { display: flex; height: 20px; border: 1px solid #444; border-radius: 4px; overflow: hidden; background: #2c2c2c; }
.dot { width: 18px; height: 100%; flex: none; background: radial-gradient(circle at center, #a0a0a0 3px, transparent 4px); }
.dot.g { background: radial-gradient(circle at center, #60c060 3px, transparent 4px); }
.dot.y { background: radial-gradient(circle at center, #c7c729 3px, transparent 4px); }
.dot.v { background: radial-gradient(circle at center, #6363c7 3px, transparent 4px); }
.w input { flex: 1; width: 0; text-align: center; background: linear-gradient(90deg, #547fc4 var(--fill, 0%), #575757 var(--fill, 0%)); }
.col { flex: 1; background: #e7e7e7; }
.vec { align-items: start; margin-bottom: 1px; }
.vec > label { line-height: 20px; }
.vec .w { height: 59px; background: none; border: 0; overflow: visible; }
.vec .dot { width: 20px; height: 20px; background-color: #2c2c2c; border: 1px solid #444; border-radius: 4px; margin-right: 6px; }
.v3 { flex: 1; display: grid; grid-template-rows: repeat(3, 1fr); gap: 1px; border: 1px solid #444; border-radius: 4px; overflow: hidden; background: #444; }
.v3 input { width: 100%; min-height: 0; }
.an { width: 4px; height: 4px; border-radius: 50%; background: #c8c8c8; }
.an3 { display: grid; gap: 16px; padding-top: 8px; }

.mark { position: absolute; left: -138px; top: 224px; width: 200px; height: 150px; pointer-events: none; z-index: 2; }

/* status bar */
.status { display: flex; align-items: center; height: 20px; flex: none; margin-top: 1px; padding: 1px 9px 0 9px; background: #303030; color: #a3a3a3; }
.hint { display: flex; align-items: center; gap: 9px; }
.h1 { width: 64px; }
.h2 { width: 172px; gap: 0; }
.h2 span { margin-left: 7px; }
.drag { width: 4px; height: 10px; }
.h3 { width: 236px; }
.stats { margin-left: auto; }
```
FILE: grid.js
```js
// Ground grid seen by a perspective camera that orbits the world origin.
const F = 1100, DIST = 17.9, CX = 792, CY = 464;
const sinE = 0.4555, cosE = 0.8902, sinA = 0.9069, cosA = 0.4213;

function view(x, y) {
  return {
    r: cosA * x + sinA * y,
    u: -sinA * sinE * x + cosA * sinE * y,
    d: DIST - (sinA * cosE * x - cosA * cosE * y)
  };
}

function segment(x0, y0, x1, y1) {
  let a = view(x0, y0), b = view(x1, y1);
  const near = 2;
  if (a.d < near && b.d < near) return "";
  const cut = (p, q) => {
    const t = (near - p.d) / (q.d - p.d);
    return { r: p.r + (q.r - p.r) * t, u: p.u + (q.u - p.u) * t, d: near };
  };
  if (a.d < near) a = cut(a, b);
  if (b.d < near) b = cut(b, a);
  const pt = p => (CX + F * p.r / p.d).toFixed(1) + " " + (CY - F * p.u / p.d).toFixed(1);
  return "M" + pt(a) + "L" + pt(b);
}

const R = 220;
let minor = "", major = "";
for (let n = -R; n <= R; n++) {
  if (n === 0) continue;
  if (n % 10 === 0) {
    major += segment(n, -R, n, R) + segment(-R, n, R, n);
  } else if (Math.abs(n) < 90) {
    minor += segment(n, -90, n, 90) + segment(-90, n, 90, n);
  }
}
document.getElementById("minor").setAttribute("d", minor);
document.getElementById("major").setAttribute("d", major);
document.getElementById("axisx").setAttribute("d", segment(-R, 0, R, 0));
document.getElementById("axisy").setAttribute("d", segment(0, -R, 0, R));
```
